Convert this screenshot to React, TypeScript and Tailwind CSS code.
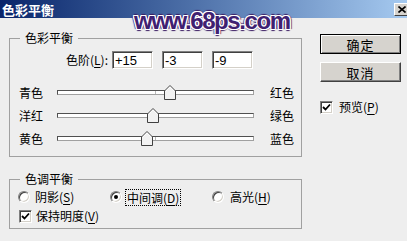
import React from "react";

function Mn({ children }: { children: React.ReactNode }) {
  return <span className="underline underline-offset-2">{children}</span>;
}

function NumBox({ value }: { value: string }) {
  return (
    <div className="flex h-[18px] w-[41px] items-center border border-t-[#808080] border-l-[#808080] border-b-white border-r-white bg-white pl-[2px] font-['Liberation_Sans',sans-serif] text-[13px] leading-none text-black shadow-[inset_1px_1px_0_#404040,inset_-1px_-1px_0_#d4d0c8]">
      {value}
    </div>
  );
}

function Slider({ value }: { value: number }) {
  const pos = ((value + 100) / 200) * 197;
  return (
    <div className="relative h-[15px] w-[197px]">
      <div className="absolute left-0 right-0 top-[5px] h-[5px] border border-t-[#505050] border-l-[#505050] border-b-[#a0a0a0] border-r-[#a0a0a0] bg-white" />
      <div className="absolute left-[98px] top-[6px] h-[3px] w-px bg-[#b8b8b8]" />
      <svg
        className="absolute top-0"
        style={{ left: pos - 6 }}
        width="12"
        height="15"
        viewBox="0 0 12 15"
      >
        <path d="M6 0.5 L11.5 6 L11.5 14.5 L0.5 14.5 L0.5 6 Z" fill="#f2f2f2" stroke="#404040" strokeWidth="1" />
        <path d="M1.5 6.4 L6 1.9 L10.5 6.4" fill="none" stroke="#ffffff" strokeWidth="1" />
      </svg>
    </div>
  );
}

function SliderRow({ left, right, value }: { left: string; right: string; value: number }) {
  return (
    <div className="flex h-[23px] items-center pl-[9px]">
      <span className="w-[38px]">{left}</span>
      <Slider value={value} />
      <span className="ml-[16px]">{right}</span>
    </div>
  );
}

function Radio({ checked }: { checked?: boolean }) {
  return (
    <div className="flex h-[12px] w-[12px] items-center justify-center rounded-full border border-t-[#808080] border-l-[#808080] border-b-white border-r-white bg-white shadow-[inset_1px_1px_0_#404040,inset_-1px_-1px_0_#d4d0c8]">
      {checked && <div className="h-[4px] w-[4px] rounded-full bg-black" />}
    </div>
  );
}

function Check() {
  return (
    <div className="flex h-[13px] w-[13px] items-center justify-center border border-t-[#808080] border-l-[#808080] border-b-white border-r-white bg-white shadow-[inset_1px_1px_0_#404040,inset_-1px_-1px_0_#d4d0c8]">
      <svg width="9" height="9" viewBox="0 0 9 9">
        <path d="M1 4 L3.5 6.5 L8 1.5" fill="none" stroke="#000" strokeWidth="1.8" />
      </svg>
    </div>
  );
}

function Btn({ label, primary }: { label: string; primary?: boolean }) {
  return (
    <div
      className={
        primary
          ? "flex h-[20px] w-[81px] items-center justify-center border border-black bg-[#d6d3ce] shadow-[inset_1px_1px_0_#ffffff,inset_-1px_-1px_0_#808080]"
          : "flex h-[20px] w-[81px] items-center justify-center border border-t-white border-l-white border-b-[#404040] border-r-[#404040] bg-[#d6d3ce] shadow-[inset_-1px_-1px_0_#808080]"
      }
    >
      <span className="text-[13px] leading-none tracking-[1px]">{label}</span>
    </div>
  );
}

export default function App() {
  return (
    <div className="relative h-[241px] w-[407px] overflow-hidden bg-[#eeeeee] font-['Noto_Sans_CJK_SC',sans-serif] text-[12px] text-black">
      <div className="flex h-[18px] items-center justify-between bg-gradient-to-r from-[#0a246a] to-[#a6caf0] pl-[2px]">
        <span className="text-[13px] font-bold leading-none text-white">色彩平衡</span>
        <div className="-mr-[3px] flex h-[13px] w-[16px] items-center justify-center border border-t-white border-l-white border-b-[#404040] border-r-[#404040] bg-[#d6d3ce]">
          <svg width="8" height="7" viewBox="0 0 8 7">
            <path d="M0.5 0.5 L7.5 6.5 M7.5 0.5 L0.5 6.5" stroke="#000" strokeWidth="1.6" />
          </svg>
        </div>
      </div>

      <div className="flex">
        <div className="flex flex-col pl-[9px] pt-[12px]">
          <fieldset className="h-[127px] w-[293px] border border-[#a0a0a0]">
            <legend className="ml-[10px] px-[5px] leading-[16px]">色彩平衡</legend>
            <div className="mt-[5px] flex h-[18px] items-center">
              <span className="w-[102px] pr-[4px] text-right">
                色阶(<Mn>L</Mn>):
              </span>
              <div className="flex gap-[9px]">
                <NumBox value="+15" />
                <NumBox value="-3" />
                <NumBox value="-9" />
              </div>
            </div>
            <div className="mt-[12px] flex flex-col">
              <SliderRow left="青色" right="红色" value={15} />
              <SliderRow left="洋红" right="绿色" value={-3} />
              <SliderRow left="黄色" right="蓝色" value={-9} />
            </div>
          </fieldset>

          <fieldset className="mt-[14px] h-[58px] w-[293px] border border-[#a0a0a0]">
            <legend className="ml-[10px] px-[5px] leading-[16px]">色调平衡</legend>
            <div className="mt-[1px] flex h-[18px] items-center pl-[8px]">
              <div className="flex w-[92px] items-center gap-[5px]">
                <Radio />
                <span>
                  阴影(<Mn>S</Mn>)
                </span>
              </div>
              <div className="flex w-[102px] items-center gap-[3px]">
                <Radio checked />
                <span className="border border-dotted border-black px-[1px] leading-[15px]">
                  中间调(<Mn>D</Mn>)
                </span>
              </div>
              <div className="flex items-center gap-[6px]">
                <Radio />
                <span>
                  高光(<Mn>H</Mn>)
                </span>
              </div>
            </div>
            <div className="flex h-[20px] items-center gap-[4px] pl-[9px]">
              <Check />
              <span>
                保持明度(<Mn>V</Mn>)
              </span>
            </div>
          </fieldset>
        </div>

        <div className="ml-[18px] flex flex-col pt-[16px]">
          <Btn label="确定" primary />
          <div className="mt-[8px]">
            <Btn label="取消" />
          </div>
          <div className="mt-[16px] flex items-center gap-[6px]">
            <Check />
            <span>
              预览(<Mn>P</Mn>)
            </span>
          </div>
        </div>
      </div>

      <div className="absolute left-[134px] top-[9px] font-['Liberation_Sans',sans-serif] text-[24px] font-bold leading-[24px] tracking-[-1.4px] text-[#3f2171] [text-shadow:1px_0_0_#fff,-1px_0_0_#fff,0_1px_0_#fff,0_-1px_0_#fff,1px_1px_0_#fff,-1px_-1px_0_#fff,1px_-1px_0_#fff,-1px_1px_0_#fff,2px_0_1px_#3b1d63,-2px_0_1px_#3b1d63,0_2px_1px_#3b1d63,0_-2px_1px_#3b1d63]">
        www.68ps.com
      </div>
    </div>
  );
}
